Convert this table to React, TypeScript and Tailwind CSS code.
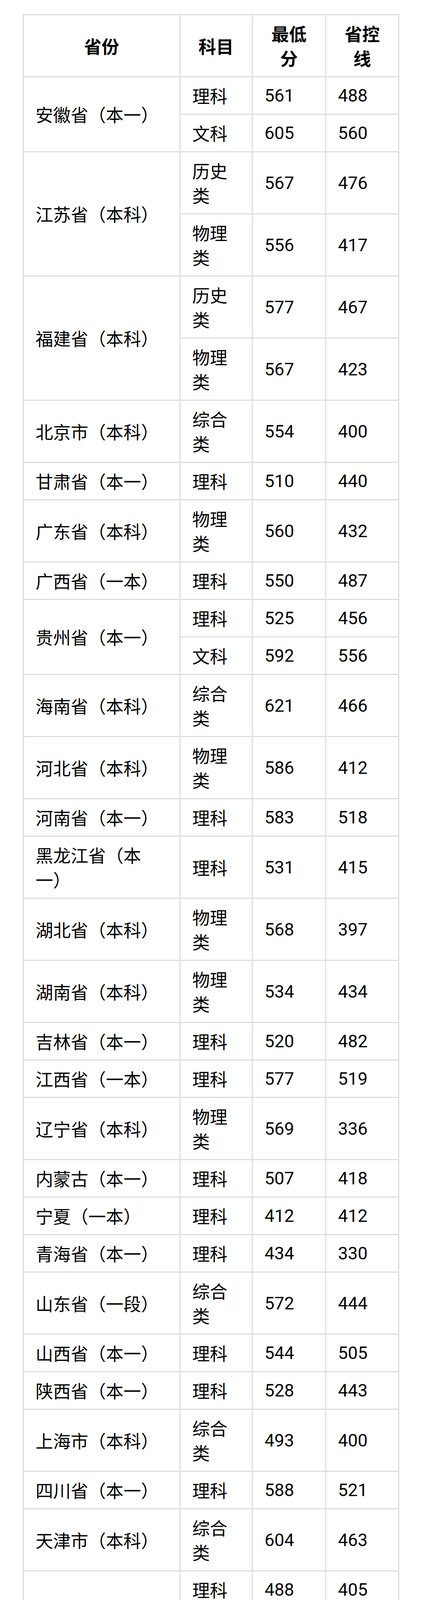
type Row = { subject: string; min: number; line: number };
type Group = { province: string; rows: Row[] };

const groups: Group[] = [
  { province: "安徽省（本一）", rows: [{ subject: "理科", min: 561, line: 488 }, { subject: "文科", min: 605, line: 560 }] },
  { province: "江苏省（本科）", rows: [{ subject: "历史类", min: 567, line: 476 }, { subject: "物理类", min: 556, line: 417 }] },
  { province: "福建省（本科）", rows: [{ subject: "历史类", min: 577, line: 467 }, { subject: "物理类", min: 567, line: 423 }] },
  { province: "北京市（本科）", rows: [{ subject: "综合类", min: 554, line: 400 }] },
  { province: "甘肃省（本一）", rows: [{ subject: "理科", min: 510, line: 440 }] },
  { province: "广东省（本科）", rows: [{ subject: "物理类", min: 560, line: 432 }] },
  { province: "广西省（一本）", rows: [{ subject: "理科", min: 550, line: 487 }] },
  { province: "贵州省（本一）", rows: [{ subject: "理科", min: 525, line: 456 }, { subject: "文科", min: 592, line: 556 }] },
  { province: "海南省（本科）", rows: [{ subject: "综合类", min: 621, line: 466 }] },
  { province: "河北省（本科）", rows: [{ subject: "物理类", min: 586, line: 412 }] },
  { province: "河南省（本一）", rows: [{ subject: "理科", min: 583, line: 518 }] },
  { province: "黑龙江省（本一）", rows: [{ subject: "理科", min: 531, line: 415 }] },
  { province: "湖北省（本科）", rows: [{ subject: "物理类", min: 568, line: 397 }] },
  { province: "湖南省（本科）", rows: [{ subject: "物理类", min: 534, line: 434 }] },
  { province: "吉林省（本一）", rows: [{ subject: "理科", min: 520, line: 482 }] },
  { province: "江西省（一本）", rows: [{ subject: "理科", min: 577, line: 519 }] },
  { province: "辽宁省（本科）", rows: [{ subject: "物理类", min: 569, line: 336 }] },
  { province: "内蒙古（本一）", rows: [{ subject: "理科", min: 507, line: 418 }] },
  { province: "宁夏（一本）", rows: [{ subject: "理科", min: 412, line: 412 }] },
  { province: "青海省（本一）", rows: [{ subject: "理科", min: 434, line: 330 }] },
  { province: "山东省（一段）", rows: [{ subject: "综合类", min: 572, line: 444 }] },
  { province: "山西省（本一）", rows: [{ subject: "理科", min: 544, line: 505 }] },
  { province: "陕西省（本一）", rows: [{ subject: "理科", min: 528, line: 443 }] },
  { province: "上海市（本科）", rows: [{ subject: "综合类", min: 493, line: 400 }] },
  { province: "四川省（本一）", rows: [{ subject: "理科", min: 588, line: 521 }] },
  { province: "天津市（本科）", rows: [{ subject: "综合类", min: 604, line: 463 }] },
  { province: "新疆（本一）", rows: [{ subject: "理科", min: 488, line: 405 }, { subject: "文科", min: 521, line: 466 }] },
  { province: "云南省（一本）", rows: [{ subject: "理科", min: 564, line: 520 }] },
  { province: "浙江省（一段）", rows: [{ subject: "综合类", min: 600, line: 495 }] },
  { province: "浙江省（二段）", rows: [{ subject: "综合类", min: 639, line: 266 }] },
  { province: "重庆市（本科）", rows: [{ subject: "物理类", min: 571, line: 446 }] },
];

// cjk cells and number cells get their own font so the line box stays 63px
const cell = "border-r-[3px] border-b-[3px] border-[#dedede] px-[30px] py-[15px] align-middle";
const cjk = "font-['Noto_Sans_CJK_SC',sans-serif] [text-spacing-trim:space-all]";
const num = "font-['Roboto',sans-serif]";

export default function App() {
  return (
    <div className="bg-white pt-[36px] pb-[14px]">
      <table className="mx-auto w-[964px] table-fixed border-separate border-spacing-0 border-l-[3px] border-t-[3px] border-[#dedede] text-[45px] leading-[63px] text-black">
        <thead>
          <tr>
            <th className={`${cell} ${cjk} w-[401px] text-center font-bold`}>省份</th>
            <th className={`${cell} ${cjk} w-[185px] text-center font-bold`}>科目</th>
            <th className={`${cell} ${cjk} w-[188px] text-center font-bold`}>最低分</th>
            <th className={`${cell} ${cjk} w-[187px] text-center font-bold`}>省控线</th>
          </tr>
        </thead>
        <tbody>
          {groups.map((group) =>
            group.rows.map((row, i) => (
              <tr key={group.province + row.subject}>
                {i === 0 && (
                  <td rowSpan={group.rows.length} className={`${cell} ${cjk} text-left`}>
                    {group.province}
                  </td>
                )}
                <td className={`${cell} ${cjk} text-left`}>{row.subject}</td>
                <td className={`${cell} ${num} text-left`}>{row.min}</td>
                <td className={`${cell} ${num} text-left`}>{row.line}</td>
              </tr>
            )),
          )}
        </tbody>
      </table>
    </div>
  );
}
